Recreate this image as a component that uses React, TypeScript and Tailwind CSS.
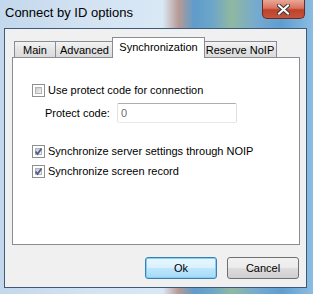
import React from 'react';

const font = { fontFamily: '"Segoe UI", "Liberation Sans", Arial, sans-serif' };

const Checkbox: React.FC<{ checked?: boolean }> = ({ checked }) => (
    <span className="relative flex h-[13px] w-[13px] shrink-0 items-center justify-center border border-[#8e8f8f] bg-white">
        <span className="absolute inset-[2px] border border-[#b4b4b4] bg-[linear-gradient(135deg,#c9c9c9,#f4f4f4)]" />
        {checked && (
            <svg className="relative" width="9" height="9" viewBox="0 0 9 9">
                <path d="M1.5 4.5 L3.5 7 L7.5 1.5" fill="none" stroke="#4d5e8f" strokeWidth="1.8" />
            </svg>
        )}
    </span>
);

const Tab: React.FC<{ label: string; width: string; active?: boolean }> = ({ label, width, active }) =>
    active ? (
        <div className={`relative z-10 -mx-[2px] flex h-[21px] items-center justify-center whitespace-nowrap border border-b-0 border-[#898c95] bg-white pb-[2px] ${width}`}>
            {label}
        </div>
    ) : (
        <div className={`flex h-[17px] items-center justify-center whitespace-nowrap border border-b-0 border-[#898c95] bg-[linear-gradient(#f3f3f3,#e3e3e3_50%,#d9d9d9)] ${width}`}>
            {label}
        </div>
    );

export default function App() {
    return (
        <div
            className="relative h-[294px] w-[313px] overflow-hidden bg-[linear-gradient(90deg,#c3d8ec_0%,#d3e3f2_30%,#d9e8f5_52%,#b89a95_57%,#5f9ccb_62%,#6ea6c9_68%,#8fb8a0_74%,#76aad0_82%,#5e9ed0_90%,#8cbde2_100%)] text-[11px] text-black"
            style={font}
        >
            {/* title bar */}
            <div className="flex h-[28px] items-center pl-[5px] pb-[2px] text-[13px]">Connect by ID options</div>
            <div className="absolute right-[8px] top-0 flex h-[19px] w-[43px] items-center justify-center rounded-b-[5px] border border-t-0 border-[#6b2a22] bg-[linear-gradient(#e9a897,#d8735f_45%,#c0412a_55%,#c4543c)]">
                <svg width="13" height="11" viewBox="0 0 13 11">
                    <path d="M2 1.5 L11 9.5 M11 1.5 L2 9.5" stroke="#3b3b3b" strokeWidth="4" strokeLinecap="square" />
                    <path d="M2 1.5 L11 9.5 M11 1.5 L2 9.5" stroke="#ffffff" strokeWidth="2" strokeLinecap="square" />
                </svg>
            </div>

            {/* client area */}
            <div className="ml-[4px] flex h-[260px] w-[303px] flex-col border border-[#3d5a78] bg-[#f0f0f0]">
                {/* tabs */}
                <div className="mt-[8px] flex h-[21px] items-end pl-[9px]">
                    <Tab label="Main" width="w-[42px]" />
                    <Tab label="Advanced" width="w-[59px] -ml-px" />
                    <Tab label="Synchronization" width="w-[93px]" active />
                    <Tab label="Reserve NoIP" width="w-[74px]" />
                </div>
                <div className="ml-[7px] h-[188px] w-[288px] -mt-px border border-[#898c95] bg-white">
                    <div className="flex flex-col pl-[19px] pt-[25px]">
                        <label className="flex h-[14px] items-center gap-[3px]">
                            <Checkbox />
                            <span>Use protect code for connection</span>
                        </label>
                        <div className="mt-[6px] flex items-center pl-[13px]">
                            <span className="w-[72px]">Protect code:</span>
                            <div className="flex h-[20px] w-[120px] items-center rounded-[2px] border border-[#abadb3] border-l-[#e2e3ea] border-r-[#dbdfe6] border-b-[#e3e9ef] pl-[3px] text-[#6d6d6d]">
                                0
                            </div>
                        </div>
                        <label className="mt-[21px] flex h-[14px] items-center gap-[3px]">
                            <Checkbox checked />
                            <span>Synchronize server settings through NOIP</span>
                        </label>
                        <label className="mt-[6px] flex h-[14px] items-center gap-[3px]">
                            <Checkbox checked />
                            <span>Synchronize screen record</span>
                        </label>
                    </div>
                </div>
                {/* buttons */}
                <div className="mt-[12px] flex justify-end gap-[10px] pr-[7px]">
                    <button className="h-[22px] w-[72px] rounded-[3px] border border-[#3c7fb1] bg-[linear-gradient(#eaf6fd,#d9f0fc_50%,#bee6fd_51%,#a7d9f5)] shadow-[0_0_0_1px_#7ed0f5_inset]">
                        Ok
                    </button>
                    <button className="h-[22px] w-[72px] rounded-[3px] border border-[#707070] bg-[linear-gradient(#f2f2f2,#ebebeb_50%,#dddddd_51%,#cfcfcf)]">
                        Cancel
                    </button>
                </div>
            </div>
        </div>
    );
}
